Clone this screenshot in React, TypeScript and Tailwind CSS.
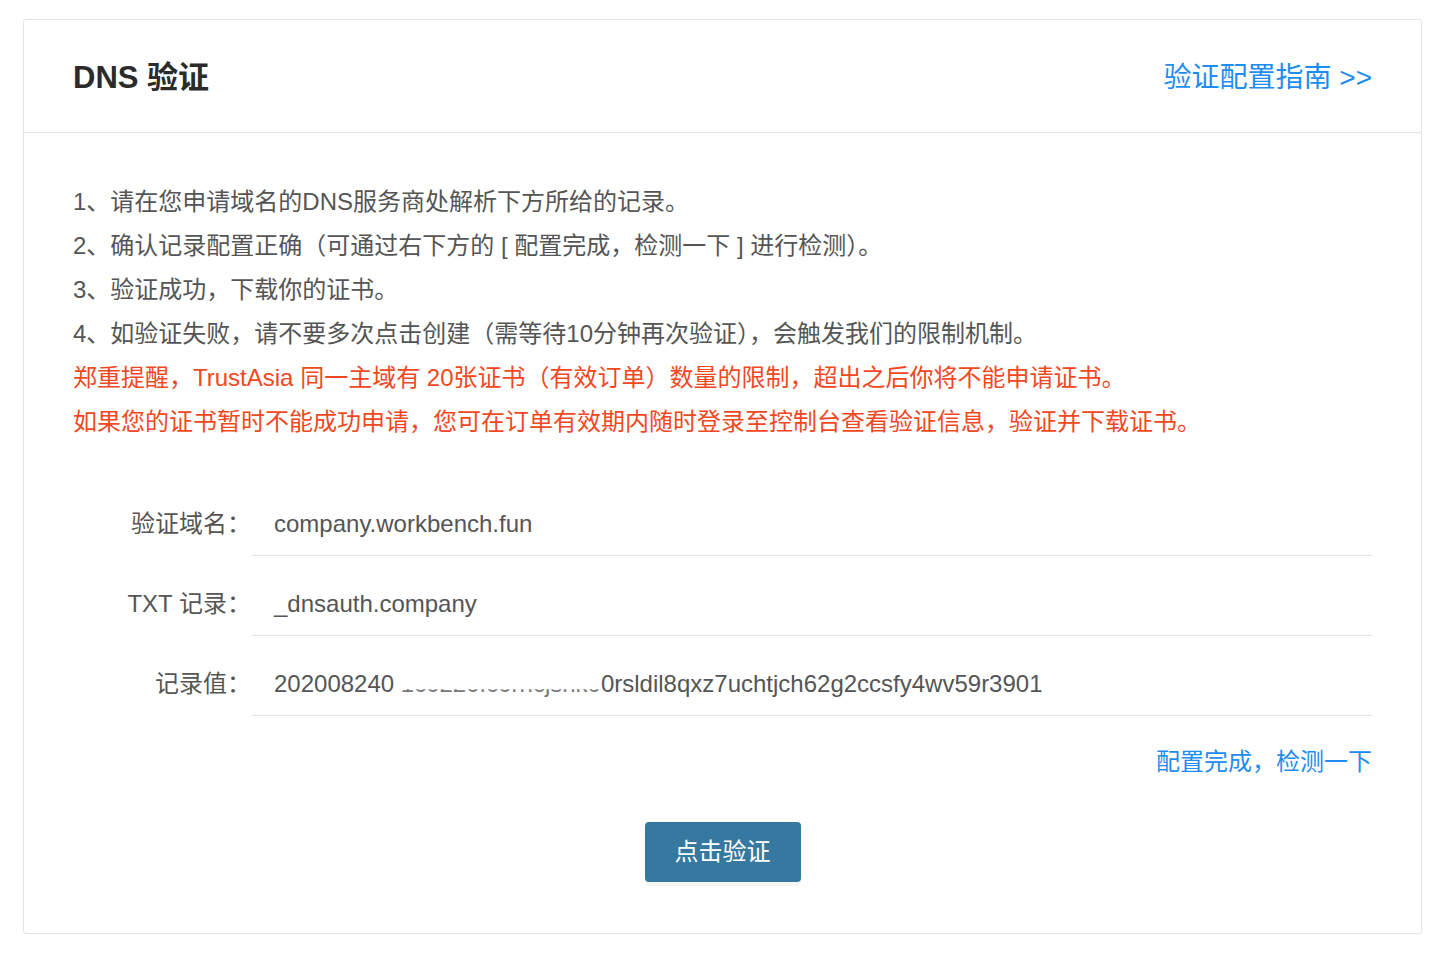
import React from 'react';

const font = '"Liberation Sans", "Noto Sans CJK SC", sans-serif';

const steps = [
  '1、请在您申请域名的DNS服务商处解析下方所给的记录。',
  '2、确认记录配置正确（可通过右下方的 [ 配置完成，检测一下 ] 进行检测）。',
  '3、验证成功，下载你的证书。',
  '4、如验证失败，请不要多次点击创建（需等待10分钟再次验证），会触发我们的限制机制。',
];

const warnings = [
  '郑重提醒，TrustAsia 同一主域有 20张证书（有效订单）数量的限制，超出之后你将不能申请证书。',
  '如果您的证书暂时不能成功申请，您可在订单有效期内随时登录至控制台查看验证信息，验证并下载证书。',
];

const FieldRow: React.FC<{ label: string; children: React.ReactNode }> = ({ label, children }) => (
  <div className="flex">
    <div className="w-[178px] shrink-0 pt-[32px] text-right text-[24px] leading-[32px] text-[#555]">{label}</div>
    <div className="ml-[1px] h-[80px] flex-1 border-b border-[#e4e4e4] pt-[32px] pl-[22px] text-[24px] leading-[32px] text-[#555] whitespace-nowrap">
      {children}
    </div>
  </div>
);

export default function App() {
  return (
    <div className="min-h-[960px] bg-white pt-[19px] pl-[23px]" style={{ fontFamily: font }}>
      <div className="w-[1399px] rounded-[3px] border border-[#e5e5e5] bg-white">
        <div className="flex h-[113px] items-center justify-between border-b border-[#e5e5e5] px-[49px] pt-[4px]">
          <h2 className="text-[31px] font-semibold text-[#2b2b2b]">DNS 验证</h2>
          <a className="text-[28px] text-[#1e8cf0]">验证配置指南 &gt;&gt;</a>
        </div>

        <div className="px-[49px] pt-[47px] pb-[51px]">
          <div className="text-[24px] leading-[44px]">
            {steps.map((s) => (
              <p key={s} className="text-[#555]">{s}</p>
            ))}
            {warnings.map((s) => (
              <p key={s} className="text-[#f2481f]">{s}</p>
            ))}
          </div>

          <div className="mt-[32px]">
            <FieldRow label="验证域名：">company.workbench.fun</FieldRow>
            <FieldRow label="TXT 记录：">_dnsauth.company</FieldRow>
            <FieldRow label="记录值：">
              <span>202008240 </span>
              <span className="text-[#777] [clip-path:inset(71%_0_0_0)]">1c0220fc0rhcjsnk0</span>
              <span>0rsldil8qxz7uchtjch62g2ccsfy4wv59r3901</span>
            </FieldRow>
          </div>

          <div className="mt-[30px] text-right text-[24px] leading-[32px] text-[#1e8cf0]">配置完成，检测一下</div>

          <div className="mt-[44px] flex justify-center">
            <button className="h-[60px] w-[156px] rounded-[4px] bg-[#3778a0] text-[24px] text-white shadow-[0_4px_0_#f6f6f6]">
              点击验证
            </button>
          </div>
        </div>
      </div>
    </div>
  );
}
